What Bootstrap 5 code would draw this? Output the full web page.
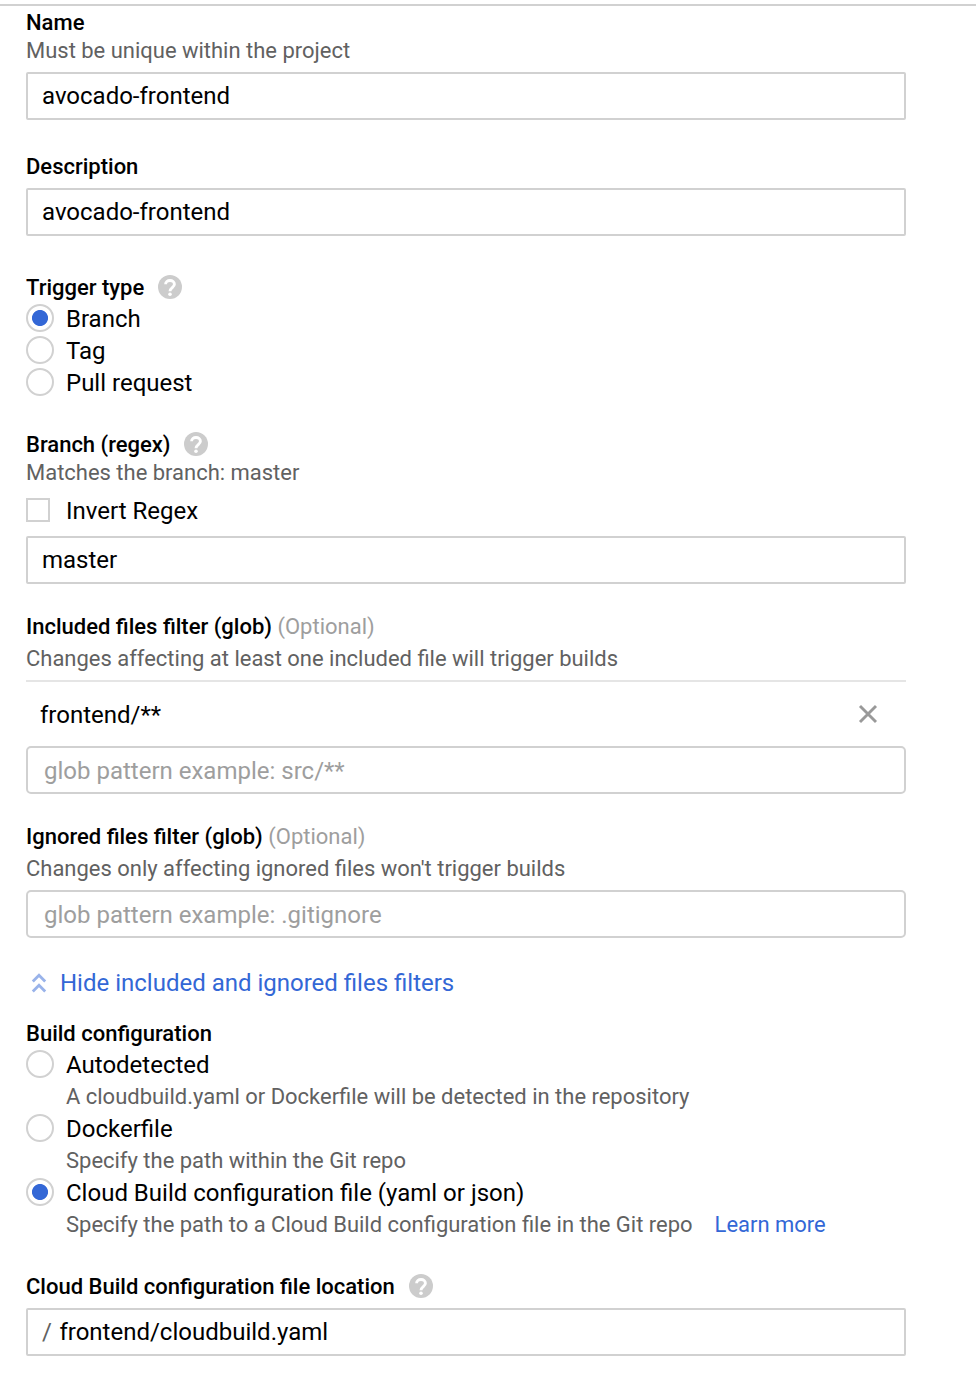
<!DOCTYPE html>
<html lang="en">
<head>
<meta charset="utf-8">
<meta name="viewport" content="width=device-width, initial-scale=1">
<title>Edit trigger</title>
<link href="https://cdn.jsdelivr.net/npm/bootstrap@5.3.0/dist/css/bootstrap.min.css" rel="stylesheet">
<style>
  body { font-family: Roboto, "Liberation Sans", sans-serif; font-size: 24px; color: #000; background: #fff; }
  .page { border-top: 2px solid #d1d1d1; margin-top: 4px; padding: 3px 70px 0 26px; }
  .field-title { font-size: 22px; line-height: 28px; font-weight: 500; display: flex; align-items: center; margin: 0; white-space: pre; }
  .field-title .optional { font-weight: 400; color: #9e9e9e; }
  .field-title svg { margin: 0 0 2px 14px; }
  .hint { font-size: 21.97px; line-height: 28px; color: #616161; margin: 0; white-space: nowrap; }
  .form-control, .form-control:focus { height: 48px; border: 2px solid #d1d1d1; border-radius: 2px; padding: 0 14px; font-size: 24px; line-height: 44px; color: #000; box-shadow: none; }
  .form-control.glob { border-radius: 5px; padding: 2px 16px 0; }
  .form-control::placeholder { color: #9e9e9e; opacity: 1; }
  .form-check { min-height: 32px; height: 32px; padding: 0; margin: 0; display: flex; align-items: center; }
  .form-check .form-check-input { float: none; flex: none; width: 28px; height: 28px; margin: 0 12px 0 0; border: 2px solid #d1d1d1; background-color: #fff; box-shadow: none; }
  .form-check .form-check-input:checked { border-color: #d1d1d1; background: radial-gradient(circle, #3367d6 7.6px, #fff 8.4px) border-box; }
  .form-check .form-check-input[type=checkbox] { width: 24px; height: 24px; margin-right: 16px; border-radius: 0; }
  .form-check-label { line-height: 32px; padding-top: 1px; white-space: nowrap; }
  .sub-hint { padding: 1px 0 0 40px; line-height: 32px; height: 32px; }
  .blue, .blue:hover { color: #3367d6; text-decoration: none; }
  .glob-item { border-top: 2px solid #e5e5e5; height: 66px; padding: 2px 28px 0 14px; }
  .path-box span { color: #616161; margin-right: 7.500px; }
</style>
</head>
<body>
<svg class="d-none">
  <symbol id="help" viewBox="0 0 24 24"><circle cx="12" cy="12" r="12" fill="#ccc"/><path d="M7.600 9.300C7.600 7 9.500 5.500 12 5.500s4.400 1.500 4.400 3.800c0 3.200-4.400 3.400-4.400 7" fill="none" stroke="#fff" stroke-width="2.900"/><circle cx="12" cy="19.300" r="1.800" fill="#fff"/></symbol>
</svg>
<form class="page">
  <section>
    <label class="field-title" for="name">Name</label>
    <p class="hint">Must be unique within the project</p>
    <input id="name" class="form-control" style="margin-top:7px" value="avocado-frontend">
  </section>

  <section style="margin-top:33px">
    <label class="field-title" for="desc">Description</label>
    <input id="desc" class="form-control" style="margin-top:7px" value="avocado-frontend">
  </section>

  <section style="margin-top:38px">
    <div class="field-title">Trigger type<svg width="24" height="24"><use href="#help"/></svg></div>
    <div class="form-check"><input class="form-check-input" type="radio" name="type" id="t1" checked><label class="form-check-label" for="t1">Branch</label></div>
    <div class="form-check"><input class="form-check-input" type="radio" name="type" id="t2"><label class="form-check-label" for="t2">Tag</label></div>
    <div class="form-check"><input class="form-check-input" type="radio" name="type" id="t3"><label class="form-check-label" for="t3">Pull request</label></div>
  </section>

  <section style="margin-top:33px">
    <div class="field-title">Branch (regex)<svg width="24" height="24" style="margin-left:13px"><use href="#help"/></svg></div>
    <p class="hint">Matches the branch: master</p>
    <div class="form-check" style="margin-top:7px"><input class="form-check-input" type="checkbox" id="inv"><label class="form-check-label" for="inv">Invert Regex</label></div>
    <input class="form-control" style="margin-top:10px" value="master">
  </section>

  <section style="margin-top:29px">
    <div class="field-title">Included files filter (glob) <span class="optional">(Optional)</span></div>
    <p class="hint pt-1">Changes affecting at least one included file will trigger builds</p>
    <div class="glob-item d-flex align-items-center justify-content-between" style="margin-top:7px">
      <span>frontend/**</span>
      <svg width="20" height="20" viewBox="0 0 20 20" stroke="#999" stroke-width="2.900" style="margin-bottom:2px"><path d="M2 2L18 18M18 2L2 18"/></svg>
    </div>
    <input class="form-control glob" placeholder="glob pattern example: src/**">
  </section>

  <section style="margin-top:29px">
    <div class="field-title">Ignored files filter (glob) <span class="optional">(Optional)</span></div>
    <p class="hint pt-1">Changes only affecting ignored files won't trigger builds</p>
    <input class="form-control glob" style="margin-top:7px" placeholder="glob pattern example: .gitignore">
  </section>

  <a href="#" class="blue d-flex align-items-center" style="height:32px;margin-top:29px">
    <svg width="26" height="20" viewBox="0 0 26 20" fill="none" stroke="#99b3ea" stroke-width="2.800" style="margin:0 8px 1px 0"><path d="M6.800 8.400L13 2.200L19.200 8.400M6.800 18.400L13 12.200L19.200 18.400"/></svg>
    <span>Hide included and ignored files filters</span>
  </a>

  <section style="margin-top:21px">
    <div class="field-title">Build configuration</div>
    <div class="form-check"><input class="form-check-input" type="radio" name="cfg" id="c1"><label class="form-check-label" for="c1">Autodetected</label></div>
    <p class="hint sub-hint">A cloudbuild.yaml or Dockerfile will be detected in the repository</p>
    <div class="form-check"><input class="form-check-input" type="radio" name="cfg" id="c2"><label class="form-check-label" for="c2">Dockerfile</label></div>
    <p class="hint sub-hint">Specify the path within the Git repo</p>
    <div class="form-check"><input class="form-check-input" type="radio" name="cfg" id="c3" checked><label class="form-check-label" for="c3">Cloud Build configuration file (yaml or json)</label></div>
    <p class="hint sub-hint d-flex">Specify the path to a Cloud Build configuration file in the Git repo<a href="#" class="blue" style="margin-left:22px">Learn more</a></p>
  </section>

  <section style="margin-top:33px">
    <div class="field-title">Cloud Build configuration file location<svg width="24" height="24"><use href="#help"/></svg></div>
    <div class="form-control path-box d-flex" style="margin-top:7px"><span>/</span>frontend/cloudbuild.yaml</div>
  </section>
</form>
<script src="https://cdn.jsdelivr.net/npm/bootstrap@5.3.0/dist/js/bootstrap.bundle.min.js"></script>
</body>
</html>
